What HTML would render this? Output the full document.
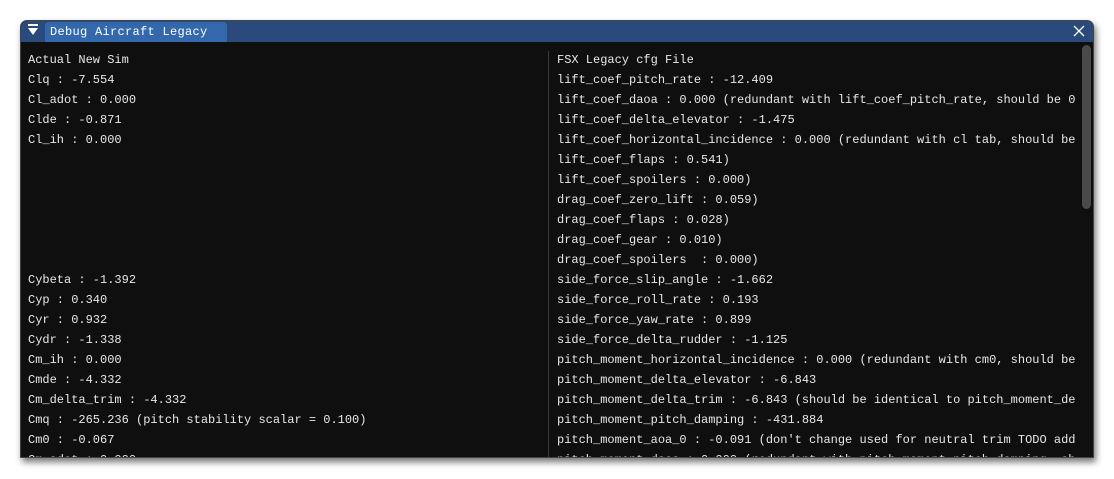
<!DOCTYPE html>
<html><head><style>
html,body{margin:0;padding:0;background:#fff;width:1114px;height:479px;overflow:hidden}
#win{position:absolute;left:20px;top:20px;width:1074px;height:438px;background:#0f0f0f;border-radius:7px 7px 0 0;overflow:hidden;box-shadow:2px 4px 7px rgba(0,0,0,.55);border:1px solid #444;box-sizing:border-box}
#bar{position:absolute;left:0;top:0;right:0;height:21px;background:#2a4a7c}
#tab{position:absolute;left:24px;top:1px;width:182px;height:20px;background:#3468ad;border-radius:4px 4px 0 0}
#tab span{position:absolute;left:5px;top:3px;color:#fff;font:12px "Liberation Mono",monospace;letter-spacing:.3px}
#tri{position:absolute;left:7px;top:7px;width:0;height:0;border-left:5px solid transparent;border-right:5px solid transparent;border-top:7px solid #fff}
#tri:before{content:"";position:absolute;left:-5px;top:-11px;width:10px;height:2px;background:#fff}
#x{position:absolute;right:7px;top:3px;width:14px;height:14px}
.col{position:absolute;top:29px;font:12px/20px "Liberation Mono",monospace;color:#e8e8e8;white-space:pre;overflow:hidden}
#l{left:7px;width:520px}
#r{left:536px;width:519px}
#div{position:absolute;left:527px;top:30px;width:1px;height:410px;background:#3a3a3a}
#sb{position:absolute;left:1061px;top:24px;width:9px;height:164px;background:#4a4a4a;border-radius:5px}
</style></head><body>
<div id="win">
<div id="bar"><div id="tab"><span>Debug Aircraft Legacy</span></div><div id="tri"></div>
<svg id="x" viewBox="0 0 14 14"><path d="M2 2L12 12M12 2L2 12" stroke="#fff" stroke-width="1.3"/></svg></div>
<div id="div"></div>
<div class="col" id="l">Actual New Sim
Clq : -7.554
Cl_adot : 0.000
Clde : -0.871
Cl_ih : 0.000






Cybeta : -1.392
Cyp : 0.340
Cyr : 0.932
Cydr : -1.338
Cm_ih : 0.000
Cmde : -4.332
Cm_delta_trim : -4.332
Cmq : -265.236 (pitch stability scalar = 0.100)
Cm0 : -0.067
Cm_adot : 0.000</div>
<div class="col" id="r">FSX Legacy cfg File
lift_coef_pitch_rate : -12.409
lift_coef_daoa : 0.000 (redundant with lift_coef_pitch_rate, should be 0)
lift_coef_delta_elevator : -1.475
lift_coef_horizontal_incidence : 0.000 (redundant with cl tab, should be 0)
lift_coef_flaps : 0.541)
lift_coef_spoilers : 0.000)
drag_coef_zero_lift : 0.059)
drag_coef_flaps : 0.028)
drag_coef_gear : 0.010)
drag_coef_spoilers  : 0.000)
side_force_slip_angle : -1.662
side_force_roll_rate : 0.193
side_force_yaw_rate : 0.899
side_force_delta_rudder : -1.125
pitch_moment_horizontal_incidence : 0.000 (redundant with cm0, should be 0)
pitch_moment_delta_elevator : -6.843
pitch_moment_delta_trim : -6.843 (should be identical to pitch_moment_delta_elevator)
pitch_moment_pitch_damping : -431.884
pitch_moment_aoa_0 : -0.091 (don't change used for neutral trim TODO add)
pitch_moment_daoa : 0.000 (redundant with pitch_moment_pitch_damping, should be 0)</div>
<div id="sb"></div>
</div>
</body></html>
